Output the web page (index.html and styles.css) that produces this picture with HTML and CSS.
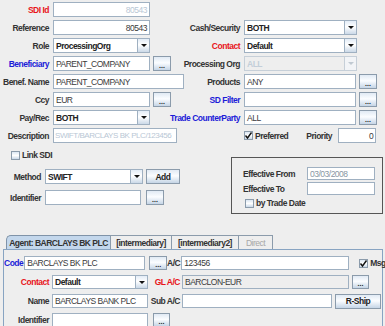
FILE: index.html
```html
<!DOCTYPE html>
<html>
<head>
<meta charset="utf-8">
<title>SDI</title>
<link rel="stylesheet" href="styles.css">
</head>
<body>
<div class="form">
  <div class="lbl red">SDI Id</div>
  <div class="cell"><div class="tf w97 dis right">80543</div></div>
  <div></div><div></div>

  <div class="lbl">Reference</div>
  <div class="cell"><div class="tf w97 right">80543</div></div>
  <div class="lbl">Cash/Security</div>
  <div class="cell"><div class="cb w113"><span class="t">BOTH</span><span class="arr"></span></div></div>

  <div class="lbl">Role</div>
  <div class="cell"><div class="cb w97"><span class="t">ProcessingOrg</span><span class="arr"></span></div></div>
  <div class="lbl red">Contact</div>
  <div class="cell"><div class="cb w113"><span class="t">Default</span><span class="arr"></span></div></div>

  <div class="lbl blue">Beneficiary</div>
  <div class="cell"><div class="tf w97">PARENT_COMPANY</div><div class="btn dots">...</div></div>
  <div class="lbl">Processing Org</div>
  <div class="cell"><div class="cb w113 dis"><span class="t">ALL</span><span class="arr"></span></div></div>

  <div class="lbl">Benef. Name</div>
  <div class="cell"><div class="tf w131">PARENT_COMPANY</div></div>
  <div class="lbl">Products</div>
  <div class="cell"><div class="tf w112">ANY</div><div class="btn dots">...</div></div>

  <div class="lbl">Ccy</div>
  <div class="cell"><div class="tf w97">EUR</div><div class="btn dots">...</div></div>
  <div class="lbl blue">SD Filter</div>
  <div class="cell"><div class="tf w112"></div><div class="btn dots">...</div></div>

  <div class="lbl">Pay/Rec</div>
  <div class="cell"><div class="cb w97"><span class="t">BOTH</span><span class="arr"></span></div></div>
  <div class="lbl blue">Trade CounterParty</div>
  <div class="cell"><div class="tf w112">ALL</div><div class="btn dots">...</div></div>

  <div class="lbl">Description</div>
  <div class="cell"><div class="tf w124 dis desc">SWIFT/BARCLAYS BK PLC/123456</div></div>
  <div></div>
  <div class="cell pref">
    <span class="chk"><span class="box"><svg viewBox="0 0 9 9" width="9" height="9"><path d="M1.5 4.5 L3.5 7 L7.5 1.5" fill="none" stroke="#111" stroke-width="1.4"/></svg></span>Preferred</span>
    <span class="lbl prio">Priority</span>
    <div class="tf w38 right">0</div>
  </div>
</div>

<div class="sec2">
  <div class="leftcol">
    <span class="chk link"><span class="box"></span>Link SDI</span>
    <div class="row method">
      <span class="lbl l41">Method</span>
      <div class="cb w98"><span class="t">SWIFT</span><span class="arr"></span></div>
      <div class="btn add">Add</div>
    </div>
    <div class="row ident">
      <span class="lbl l41">Identifier</span>
      <div class="tf w96"></div>
      <div class="btn dots">...</div>
    </div>
  </div>
  <div class="effbox">
    <span class="lbl eff">Effective From</span>
    <div class="tf effv">03/03/2008</div>
    <span class="lbl eff">Effective To</span>
    <div class="tf"></div>
    <span class="chk trade"><span class="box"></span>by Trade Date</span>
  </div>
</div>

<div class="tabs">
  <div class="tab sel t1">Agent: BARCLAYS BK PLC</div>
  <div class="tab t2">[intermediary]</div>
  <div class="tab t3">[intermediary2]</div>
  <div class="tab dtab t4">Direct</div>
</div>
<div class="panel">
  <div class="prow">
    <span class="lbl blue lcode">Code</span>
    <div class="tf w121">BARCLAYS BK PLC</div>
    <div class="btn dots b1">...</div>
    <span class="lbl l2a">A/C</span>
    <div class="tf w168">123456</div>
    <span class="chk msg"><span class="box"><svg viewBox="0 0 9 9" width="9" height="9"><path d="M1.5 4.5 L3.5 7 L7.5 1.5" fill="none" stroke="#111" stroke-width="1.4"/></svg></span>Msg</span>
  </div>
  <div class="prow">
    <span class="lbl red l48">Contact</span>
    <div class="cb w96"><span class="t">Default</span><span class="arr"></span></div>
    <span class="lbl red l2">GL A/C</span>
    <div class="tf w167 ro">BARCLON-EUR</div>
    <div class="btn dots b2">...</div>
  </div>
  <div class="prow">
    <span class="lbl l48">Name</span>
    <div class="tf w96">BARCLAYS BANK PLC</div>
    <span class="lbl l2">Sub A/C</span>
    <div class="tf w150"></div>
    <div class="btn rship">R-Ship</div>
  </div>
  <div class="prow">
    <span class="lbl l48">Identifier</span>
    <div class="tf w96"></div>
    <div class="btn dots b3">...</div>
  </div>
</div>
</body>
</html>
```

FILE: styles.css
```css
* { box-sizing: border-box; margin: 0; padding: 0; }
html, body { width: 385px; height: 326px; overflow: hidden; }
body {
  background: #eeeeee;
  font-family: "Liberation Sans", Arial, sans-serif;
  font-size: 8.5px;
  letter-spacing: -0.5px;
  color: #333333;
}

.form {
  display: grid;
  grid-template-columns: 49px 134px 49px 135px;
  column-gap: 4px;
  grid-auto-rows: 15px;
  row-gap: 3px;
  padding-top: 2px;
}

.lbl {
  display: flex;
  align-items: center;
  justify-content: flex-end;
  font-weight: bold;
  white-space: nowrap;
  color: #333333;
}
.red { color: #e8141a; }
.blue { color: #1c1cd8; }

.cell { display: flex; align-items: center; gap: 3px; }

.tf {
  height: 15px;
  border: 1px solid #9fb0c1;
  background: #ffffff;
  padding: 0 2px;
  display: flex;
  align-items: center;
  white-space: nowrap;
  overflow: hidden;
  flex: none;
  color: #3a3a3a;
}
.right { justify-content: flex-end; }
.tf.dis { color: #b9c7d5; }
.tf.ro { background: #eeeeee; }
.tf.desc { font-size: 8px; letter-spacing: -0.45px; padding: 0 1px; }

.w38 { width: 38px; }
.w96 { width: 96px; }
.w97 { width: 97px; }
.w98 { width: 98px; }
.w112 { width: 112px; }
.w113 { width: 113px; }
.w121 { width: 121px; }
.w124 { width: 124px; }
.w131 { width: 131px; }
.w150 { width: 150px; }
.w167 { width: 167px; }
.w168 { width: 168px; }

.cb {
  height: 15px;
  border: 1px solid #9fb0c1;
  background: #ffffff;
  display: flex;
  align-items: center;
  font-weight: bold;
  flex: none;
  color: #222222;
}
.cb .t { flex: 1; padding-left: 2px; white-space: nowrap; overflow: hidden; }
.cb .arr {
  width: 12px;
  height: 100%;
  border-left: 1px solid #9fb0c1;
  background: linear-gradient(#e3ecf6, #ffffff 45%, #cbd9e8);
  display: flex;
  align-items: center;
  justify-content: center;
}
.cb .arr::after {
  content: "";
  border-left: 3px solid transparent;
  border-right: 3px solid transparent;
  border-top: 3px solid #111111;
}
.cb.dis { background: #eeeeee; color: #c3ced9; border-color: #c6cfd8; }
.cb.dis .arr { border-left-color: #c6cfd8; background: #f2f4f7; }
.cb.dis .arr::after { border-top-color: #c0c9d2; }

.btn {
  height: 15px;
  border: 1px solid #8b9bab;
  background: linear-gradient(#e1eaf4, #fbfdff 45%, #c5d5e6);
  display: flex;
  align-items: center;
  justify-content: center;
  font-weight: bold;
  flex: none;
  color: #222222;
}
.dots { width: 18px; font-size: 7px; letter-spacing: 0; padding-top: 3px; }

.chk {
  display: flex;
  align-items: center;
  gap: 2px;
  font-weight: bold;
  white-space: nowrap;
  color: #333333;
}
.box {
  width: 9px;
  height: 9px;
  border: 1px solid #8b9bab;
  background: linear-gradient(#dce7f3, #ffffff 50%, #c9d8e8);
  flex: none;
  display: flex;
  align-items: center;
  justify-content: center;
  overflow: visible;
}
.box svg { flex: none; }

.pref { gap: 0; }
.pref .prio { margin-left: 18px; width: 32px; justify-content: flex-start; }

.sec2 { display: flex; margin-top: 7px; }
.leftcol { width: 231px; display: flex; flex-direction: column; }
.link { height: 10px; padding-left: 11px; }
.row { display: flex; align-items: center; }
.method { margin-top: 9px; height: 15px; }
.ident { margin-top: 6px; height: 15px; }
.l41 { width: 41px; margin-right: 4px; height: 15px; }
.add { width: 34px; margin-left: 3px; }
.ident .dots { margin-left: 5px; }

.effbox {
  margin-top: 7px;
  width: 152px;
  height: 57px;
  border: 1px solid #555555;
  padding: 9px 7px 0 11px;
  display: grid;
  grid-template-columns: 64px 68px;
  grid-template-rows: 13px 13px 10px;
  row-gap: 2px;
}
.eff { justify-content: flex-start; }
.effbox .tf { height: 13px; }
.effv { color: #8a96a3; }
.trade { grid-column: 1 / 3; margin-top: 2px; padding-left: 2px; }

.tabs { display: flex; margin-top: 21px; padding-left: 6px; height: 14px; }
.tab {
  height: 14px;
  border: 1px solid #8b9bab;
  border-bottom: none;
  border-right: none;
  background: #eeeeee;
  font-weight: bold;
  display: flex;
  align-items: center;
  justify-content: center;
  white-space: nowrap;
  color: #333333;
}
.tab.sel { background: #c3d7ec; border-top-left-radius: 5px; border-color: #7f93a8; }
.t1 { width: 104px; }
.t2 { width: 61px; }
.t3 { width: 67px; }
.t4 { width: 35px; border-right: 1px solid #8b9bab; }
.dtab { color: #a7a7a7; font-weight: normal; }

.panel {
  margin-left: 3px;
  width: 380px;
  height: 90px;
  border: 1px solid #88a4c2;
  padding-top: 6px;
  display: flex;
  flex-direction: column;
  gap: 5px;
}
.prow { display: flex; align-items: center; height: 14px; }
.prow .tf, .prow .cb, .prow .btn { height: 14px; }
.lcode { width: 22px; margin-right: 1px; }
.l48 { width: 48px; padding-right: 3px; }
.l2a { width: 12px; margin-left: 2px; padding-right: 1px; }
.l2 { width: 34px; padding-right: 2px; }
.b1 { margin-left: 4px; }
.b2 { margin-left: 3px; width: 17px; }
.b3 { margin-left: 5px; width: 17px; }
.msg { margin-left: 10px; }
.rship { width: 46px; margin-left: 3px; height: 15px !important; }
```
